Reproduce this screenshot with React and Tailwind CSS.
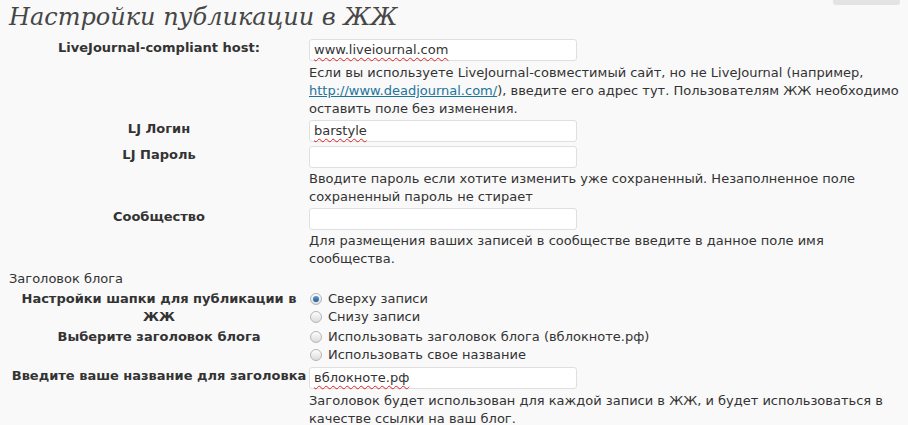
import React from "react";

const font = { fontFamily: '"DejaVu Sans", Verdana, sans-serif' };

function Field({ value }) {
  return (
    <div className="h-[22px] w-[268px] rounded-[3px] border border-[#dfdfdf] bg-white px-[4px] text-[13px] leading-[20px] text-[#333]">
      {value && (
        <span className="underline decoration-wavy decoration-[#e02020] decoration-1 underline-offset-[3px]">
          {value}
        </span>
      )}
    </div>
  );
}

function Radio({ checked, label }) {
  return (
    <div className="flex h-[18px] items-center">
      <span className="ml-[1px] flex h-[12px] w-[12px] items-center justify-center rounded-full border border-[#b5b5b5] bg-gradient-to-b from-[#fdfdfd] to-[#dcdcdc]">
        {checked && <span className="h-[6px] w-[6px] rounded-full bg-gradient-to-b from-[#5e9bd0] to-[#1f5c96]" />}
      </span>
      <span className="ml-[6px]">{label}</span>
    </div>
  );
}

function Row({ label, className = "", children }) {
  return (
    <div className={`flex ${className}`}>
      <div className="w-[300px] shrink-0 text-center text-[13px] font-bold leading-[18px] text-[#333]">{label}</div>
      <div className="flex-1">{children}</div>
    </div>
  );
}

function Desc({ lines, className = "" }) {
  return (
    <div className={`whitespace-nowrap text-[13px] leading-[18px] text-[#333] ${className}`}>
      {lines.map((l, i) => (
        <div key={i}>{l}</div>
      ))}
    </div>
  );
}

export default function App() {
  return (
    <div className="relative h-[425px] w-[908px] overflow-hidden bg-[#f9f9f9] pl-[9px]" style={font}>
      {/* help tab peeking from the top */}
      <div className="absolute right-[8px] top-0 h-[5px] w-[67px] rounded-b-[3px] bg-[#e3e3e3]" />

      <h2
        className="h-[36px] pt-[1px] text-[26px] italic leading-[32px] text-[#464646]"
        style={{ fontFamily: '"DejaVu Serif", Georgia, serif', fontSize: "24px" }}
      >
        Настройки публикации в ЖЖ
      </h2>

      <Row label="LiveJournal-compliant host:" className="mt-[3px]">
        <Field value="www.liveiournal.com" />
        <Desc
          className="mt-[3px]"
          lines={[
            "Если вы используете LiveJournal-совместимый сайт, но не LiveJournal (например,",
            <span key="a">
              <a href="#" className="text-[#21759b] underline">http://www.deadjournal.com/</a>), введите его адрес тут. Пользователям ЖЖ необходимо
            </span>,
            "оставить поле без изменения.",
          ]}
        />
      </Row>

      <Row label="LJ Логин" className="mt-[2px]">
        <Field value="barstyle" />
      </Row>

      <Row label="LJ Пароль" className="mt-[4px]">
        <Field />
        <Desc
          className="mt-[2px]"
          lines={[
            "Вводите пароль если хотите изменить уже сохраненный. Незаполненное поле",
            "сохраненный пароль не стирает",
          ]}
        />
      </Row>

      <Row label="Сообщество" className="mt-[2px]">
        <Field />
        <Desc
          className="mt-[2px]"
          lines={["Для размещения ваших записей в сообществе введите в данное поле имя", "сообщества."]}
        />
      </Row>

      <div className="mt-[2px] text-[13px] leading-[18px] text-[#333]">Заголовок блога</div>

      <Row
        label={
          <>
            Настройки шапки для публикации в
            <br />
            ЖЖ
          </>
        }
        className="mt-[2px]"
      >
        <div className="text-[13px] leading-[18px] text-[#333]">
          <Radio checked label="Сверху записи" />
          <Radio label="Снизу записи" />
        </div>
      </Row>

      <Row label="Выберите заголовок блога" className="mt-[2px]">
        <div className="text-[13px] leading-[18px] text-[#333]">
          <Radio label="Использовать заголовок блога (вблокноте.рф)" />
          <Radio label="Использовать свое название" />
        </div>
      </Row>

      <Row label="Введите ваше название для заголовка" className="mt-[3px]">
        <Field value="вблокноте.рф" />
        <Desc
          className="mt-[3px]"
          lines={[
            "Заголовок будет использован для каждой записи в ЖЖ, и будет использоваться в",
            "качестве ссылки на ваш блог.",
          ]}
        />
      </Row>
    </div>
  );
}
